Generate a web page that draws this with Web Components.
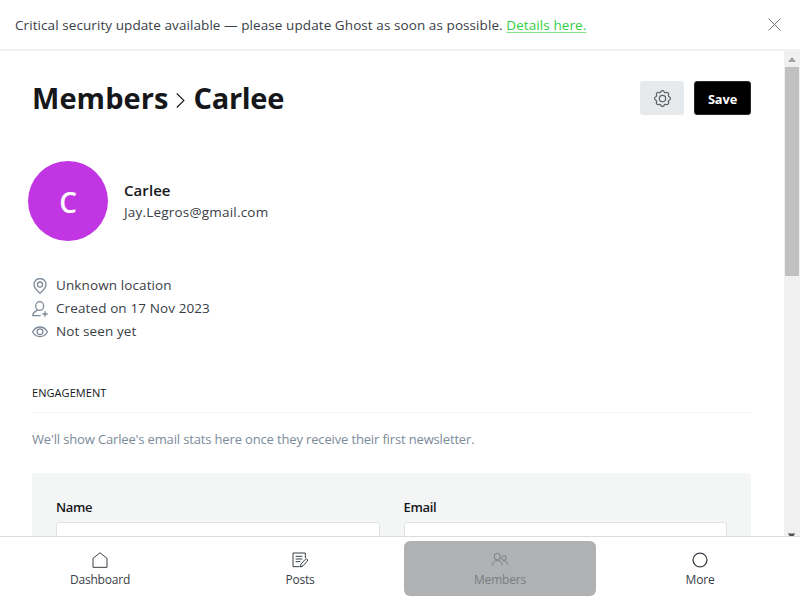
<!DOCTYPE html>
<html lang="en">
<head>
<meta charset="utf-8">
<title>Members</title>
<style>
html,body{margin:0;height:100%;overflow:hidden;background:#fff}
body{font-family:"Open Sans","Noto Sans",sans-serif;color:#394047;font-size:14px}
</style>
</head>
<body>
<ghost-app></ghost-app>
<script>
const define=(name,html)=>{
  const t=document.createElement('template');
  t.innerHTML='<style>*{box-sizing:border-box}</style>'+html;
  customElements.define(name,class extends HTMLElement{
    constructor(){super();this.attachShadow({mode:'open'}).append(t.content.cloneNode(true));}
  });
};
const ICONS={
  close:'<path d="M1 1l22 22M23 1L1 23"/>',
  cog:'<circle cx="12" cy="12" r="4.5"/><path d="M9.6 2.6c.8-2.4 4-2.4 4.8 0 .4 1.1 1.500 1.600 2.600 1.100 2.200-1 4.400 1.100 3.400 3.300-.5 1.100 0 2.200 1.100 2.600 2.300.8 2.300 4 0 4.800-1.100.4-1.600 1.500-1.100 2.600 1 2.200-1.200 4.400-3.400 3.400-1.100-.5-2.200 0-2.600 1.100-.8 2.300-4 2.300-4.800 0-.4-1.100-1.500-1.600-2.600-1.100-2.200 1-4.400-1.200-3.400-3.400.5-1.100 0-2.200-1.100-2.600-2.300-.8-2.300-4 0-4.800 1.100-.4 1.600-1.500 1.100-2.600-1-2.200 1.200-4.300 3.400-3.300 1.100.5 2.200 0 2.600-1.100z"/>',
  chevron:'<path d="M6 .8l11.500 11.200L6 23.200"/>',
  pin:'<path d="M12 23C8 19.500 3 15 3 9.700a9 8.900 0 0 1 18 0c0 5.300-5 9.800-9 13.300z"/><circle cx="12" cy="9.800" r="3.800"/>',
  adduser:'<ellipse cx="11.500" cy="7.500" rx="6" ry="6.600"/><path d="M8.500 13.500c-1 1.800-7.200 1.800-7.200 8.500H13M19.500 15.500v8M15.500 19.500h8"/>',
  eye:'<path d="M.8 12C6 2 18 2 23.200 12 18 21.200 6 21.200.8 12z"/><circle cx="12" cy="11.600" r="4.200"/>',
  home:'<path d="M1.500 9.500L12 1.200l10.500 8.300V23h-21z"/>',
  posts:'<path d="M11.500 22H1.500V1.500H20V9M5.500 6.500h10M5.500 10.500h10M5.500 14.500h7M12.500 22.500l1.200-4.500 6.500-7.200c1.800-1.500 4.300.7 2.800 2.800l-6.500 7.200z"/>',
  members:'<ellipse cx="8" cy="7" rx="4.700" ry="5"/><path d="M.8 20.500c0-5.500 3-7.500 7.200-7.500s6.700 2 7.200 7.500"/><ellipse cx="18" cy="9" rx="3.200" ry="3.600"/><path d="M16.500 13.200c4-.7 6.700 1.500 6.700 5.800"/>',
  circle:'<circle cx="12" cy="12" r="10.400"/>'
};
customElements.define('ui-icon',class extends HTMLElement{
  connectedCallback(){
    if(this.shadowRoot)return;
    const s=this.getAttribute('size')||16,w=this.getAttribute('weight')||1.5;
    this.attachShadow({mode:'open'}).innerHTML=`<style>:host{display:block;flex:none;width:${s}px;height:${s}px}svg{display:block}</style><svg width="${s}" height="${s}" viewBox="0 0 24 24" fill="none" stroke="currentColor" stroke-width="${w}">${ICONS[this.getAttribute('name')]}</svg>`;
  }
});
define('update-banner',`<style>
:host{display:flex;flex:none;height:51px;border-bottom:2px solid #f2f2f2;padding:0 19px 0 15px;align-items:center;justify-content:space-between;font-size:13.500px;line-height:20px;white-space:nowrap}
p{margin:0;padding-top:1px;letter-spacing:.08px} a{color:#30cf43;text-decoration:underline;text-decoration-color:#83e28e;text-decoration-thickness:1px;text-underline-offset:2px;text-decoration-skip-ink:none}
ui-icon{color:#61676d}
</style><p><slot></slot> <a>Details here.</a></p><ui-icon name="close" size="13" weight="1.700"></ui-icon>`);
define('page-header',`<style>
:host{display:flex;justify-content:space-between;height:34px}
h1{margin:0;display:flex;align-items:center;font-size:29px;font-weight:700;line-height:34px;color:#15171a;white-space:nowrap}
h1 span:first-child{letter-spacing:.07px}
h1 span:last-child{letter-spacing:-.3px}
ui-icon{margin:5px 6px 0 4px}
.actions{display:flex;gap:10px}
.b{height:34px;border-radius:3px;display:flex;align-items:center;justify-content:center}
.gear{width:44px;background:#e6eaed;color:#5b6268}.gear ui-icon{margin:0}
.save{width:57px;background:#000;border:1px solid #26282a;color:#fff;font-weight:700;font-size:12.800px;letter-spacing:-.1px;padding-top:2px}
</style><h1><span>Members</span><ui-icon name="chevron" size="15" weight="1.700"></ui-icon><span>Carlee</span></h1>
<div class="actions"><div class="b gear"><ui-icon name="cog" size="17" weight="1.700"></ui-icon></div><div class="b save">Save</div></div>`);
define('member-profile',`<style>
:host{display:flex;gap:16px;align-items:center;margin:46px 0 0 -4px;height:80px}
.av{width:80px;height:80px;border-radius:50%;background:#c135e2;color:#fff;display:flex;align-items:center;justify-content:center;font-size:28px;font-weight:600;padding-top:2px}
h3{margin:0;font-size:15px;line-height:22px;font-weight:600;color:#15171a;letter-spacing:.07px}
p{margin:0;font-size:13.500px;line-height:22px;letter-spacing:.2px}
</style><div class="av">C</div><div><h3><slot name="name"></slot></h3><p><slot name="mail"></slot></p></div>`);
define('meta-row',`<style>
:host{display:flex;align-items:center;gap:8px;height:23px;font-size:13.500px;line-height:23px;color:#394047;letter-spacing:.11px}
::slotted(ui-icon){color:#7c8b9a}
</style><slot name="icon"></slot><span><slot></slot></span>`);
define('form-field',`<style>
:host{display:block;flex:1;font-size:13px;font-weight:600;color:#15171a;letter-spacing:-.35px}
label{display:block;line-height:20px;margin-bottom:5px}
div{height:38px;background:#fff;border:1px solid #dfe3e6;border-radius:3px}
</style><label><slot></slot></label><div></div>`);
define('scroll-rail',`<style>
:host{display:flex;flex-direction:column;align-items:center;width:16px;background:#f0f0f0;justify-content:space-between;padding:6px 1px 0 0}
.up{border:4px solid transparent;border-top:0;border-bottom:5px solid #a3a3a3}
.thumb{width:14px;height:209px;background:#c1c1c1;margin:5px 0 auto 0}
.down{width:8px;height:3px;background:linear-gradient(#a0a0a0 0 1px,#505050 1px);clip-path:polygon(0 0,100% 0,75% 100%,25% 100%)}
</style><i class="up"></i><i class="thumb"></i><i class="down"></i>`);
define('nav-item',`<style>
:host{display:flex;flex-direction:column;align-items:center;width:192px;height:55px;border-radius:6px;font-size:12px;letter-spacing:-.2px;line-height:20px;padding-top:10.500px;gap:2.500px;color:#394047}
:host([active]){background:#afb1b3;color:#7a7e82}
</style><slot name="icon"></slot><span><slot></slot></span>`);
define('ghost-app',`<style>
:host{display:flex;flex-direction:column;width:800px;height:600px;background:#fff}
.view{display:flex;height:485px;flex:none;overflow:hidden}
main{width:784px;padding:30px 33px 0 32px;overflow:hidden}
.meta{padding-top:33px}
h4{margin:0;margin-top:41px;height:29px;border-bottom:1px solid #f1f3f4;font-size:11px;line-height:18px;font-weight:500;color:#15171a;letter-spacing:.06px}
.note{margin:16px 0 24px;font-size:13px;line-height:20px;color:#7c8b9a;letter-spacing:-.15px}
.panel{display:flex;gap:24px;background:#f4f6f6;border-radius:3px;padding:24px;height:140px}
nav{display:flex;justify-content:space-between;height:64px;border-top:1px solid #dadddf;padding:4px}
</style>
<update-banner>Critical security update available — please update Ghost as soon as possible.</update-banner>
<div class="view"><main>
<page-header></page-header>
<member-profile><span slot="name">Carlee</span><span slot="mail">Jay.Legros@gmail.com</span></member-profile>
<div class="meta">
<meta-row><ui-icon slot="icon" name="pin" weight="1.900"></ui-icon>Unknown location</meta-row>
<meta-row><ui-icon slot="icon" name="adduser" weight="2"></ui-icon>Created on 17 Nov 2023</meta-row>
<meta-row><ui-icon slot="icon" name="eye" weight="1.900"></ui-icon>Not seen yet</meta-row>
</div>
<h4>ENGAGEMENT</h4>
<p class="note">We'll show Carlee's email stats here once they receive their first newsletter.</p>
<div class="panel"><form-field>Name</form-field><form-field>Email</form-field></div>
</main><scroll-rail></scroll-rail></div>
<nav>
<nav-item><ui-icon slot="icon" name="home"></ui-icon>Dashboard</nav-item>
<nav-item><ui-icon slot="icon" name="posts"></ui-icon>Posts</nav-item>
<nav-item active><ui-icon slot="icon" name="members"></ui-icon>Members</nav-item>
<nav-item><ui-icon slot="icon" name="circle" weight="2"></ui-icon>More</nav-item>
</nav>`);
</script>
</body>
</html>
